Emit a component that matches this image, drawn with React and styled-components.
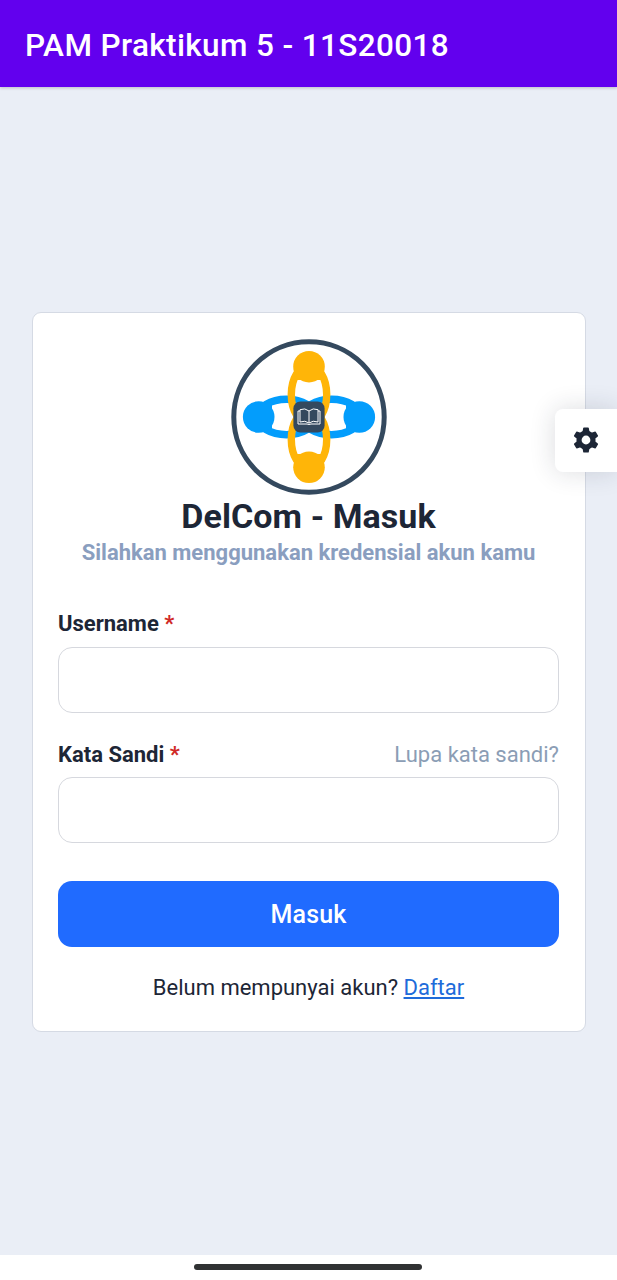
import React from "react";
import styled, { createGlobalStyle } from "styled-components";

const GlobalStyle = createGlobalStyle`
  * { box-sizing: border-box; }
  body { margin: 0; background: #fff; font-family: Roboto, "Liberation Sans", sans-serif; color: #1d2636; }
`;

const Screen = styled.div`
  position: relative;
  display: flex;
  flex-direction: column;
  height: 1280px;
  overflow: hidden;
`;

const AppBar = styled.header`
  display: flex;
  align-items: center;
  flex: none;
  height: 87px;
  padding: 4px 25px 0;
  background: #6200ee;
  box-shadow: 0 1px 3px rgba(0, 0, 0, 0.2);
  z-index: 1;
`;

const AppTitle = styled.h1`
  margin: 0;
  font-size: 31.5px;
  font-weight: 500;
  line-height: 40px;
  letter-spacing: 0.37px;
  white-space: nowrap;
  color: #fff;
`;

const Page = styled.main`
  flex: 1;
  padding: 225px 31px 0 32px;
  background: #eaeef6;
`;

const Card = styled.form`
  display: flex;
  flex-direction: column;
  height: 720px;
  padding: 26px 26px 0 25px;
  border: 1px solid #d5dae4;
  border-radius: 9px;
  background: #fff;
`;

const Brand = styled.div`
  display: flex;
  flex-direction: column;
  align-items: center;
  height: 269px;
`;

const LogoMark = styled.svg`
  flex: none;
  width: 156px;
  height: 156px;
`;

const Title = styled.h2`
  margin: 1px 0 0;
  font-size: 34px;
  font-weight: 700;
  line-height: 40px;
  letter-spacing: 0.07px;
  white-space: nowrap;
`;

const Subtitle = styled.p`
  margin: 3px 0 0;
  font-size: 22px;
  font-weight: 700;
  line-height: 28px;
  white-space: nowrap;
  color: #8a9ebf;
`;

const Field = styled.div`
  display: flex;
  flex-direction: column;
  height: 131px;
`;

const LabelRow = styled.div`
  display: flex;
  justify-content: space-between;
  height: ${({ $compact }) => ($compact ? "38px" : "39px")};
  line-height: 31px;
  font-size: 22px;
  white-space: nowrap;
`;

const Label = styled.label`
  font-weight: 700;
`;

const Required = styled.span`
  color: #d02a27;
`;

const MutedLink = styled.a`
  color: #8b9db5;
`;

const Input = styled.input`
  width: 100%;
  height: 66px;
  padding: 0 18px;
  border: 1px solid #d6d8de;
  border-radius: 14px;
  background: #fff;
  font: inherit;
  font-size: 22px;
  outline: none;
`;

const SubmitButton = styled.button`
  height: 66px;
  margin-top: 11px;
  padding: 2px 0 0;
  border: 0;
  border-radius: 14px;
  background: #206bff;
  color: #fff;
  font: 500 25px/30px Roboto, "Liberation Sans", sans-serif;
  letter-spacing: 0.15px;
`;

const Footer = styled.p`
  margin: 26px 0 0;
  text-align: center;
  font-size: 22px;
  line-height: 30px;
  white-space: nowrap;
`;

const SignUpLink = styled.a`
  color: #206bda;
  text-decoration: underline;
`;

const SettingsTab = styled.button`
  position: absolute;
  top: 409px;
  right: 0;
  display: flex;
  align-items: center;
  justify-content: center;
  width: 62px;
  height: 63px;
  padding: 0 0 2px;
  border: 0;
  border-radius: 8px 0 0 8px;
  background: #fff;
  color: #1d2636;
  box-shadow: 0 0 26px rgba(30, 39, 59, 0.16);
`;

const NavBar = styled.footer`
  display: flex;
  justify-content: center;
  flex: none;
  height: 25px;
  padding: 9px 1px 0 0;
  background: #fff;
`;

const NavHandle = styled.div`
  width: 228px;
  height: 6px;
  border-radius: 3px;
  background: #303233;
`;

function Person({ angle, color }) {
  return (
    <g transform={`rotate(${angle})`}>
      <ellipse cx="0" cy="-22.5" rx="17.7" ry="29" fill="none" stroke={color} strokeWidth="7.4" />
      <circle cx="0" cy="-50.3" r="15.8" fill={color} />
      <path d="M-12-46 V-37 H12 V-46Z" fill={color} />
    </g>
  );
}

function Logo() {
  return (
    <LogoMark viewBox="-78 -78 156 156" aria-hidden="true">
      <circle r="75.2" fill="#fff" stroke="#34495e" strokeWidth="5" />
      <Person angle={-90} color="#039dfc" />
      <Person angle={90} color="#039dfc" />
      <Person angle={0} color="#ffb508" />
      <Person angle={180} color="#ffb508" />
      <rect x="-15.6" y="-15.6" width="31.2" height="31.2" rx="7" fill="#34495e" />
      <g fill="none" stroke="#fff" strokeWidth="1" strokeLinejoin="round">
        <path d="M0-6 Q-4-9.5-9-7.3 V5 Q-4 3 0 6 Q4 3 9 5 V-7.3 Q4-9.5 0-6 V6" />
        <path d="M-9-6 H-11 V7 H-2 Q0 8 2 7 H11 V-6 H9" />
      </g>
    </LogoMark>
  );
}

function GearIcon() {
  return (
    <svg width="26" height="26" viewBox="-13 -13 26 26" aria-hidden="true">
      <g fill="currentColor" stroke="currentColor" strokeWidth="1.4" strokeLinejoin="round">
        {[0, 60, 120, 180, 240, 300].map((angle) => (
          <path key={angle} transform={`rotate(${angle})`} d="M-2.1-11.9 H2.1 L3.2-6 H-3.2Z" />
        ))}
      </g>
      <circle r="7" fill="none" stroke="currentColor" strokeWidth="5.2" />
    </svg>
  );
}

export default function App() {
  return (
    <>
      <GlobalStyle />
      <Screen>
        <AppBar>
          <AppTitle>PAM Praktikum 5 - 11S20018</AppTitle>
        </AppBar>
        <Page>
          <Card>
            <Brand>
              <Logo />
              <Title>DelCom - Masuk</Title>
              <Subtitle>Silahkan menggunakan kredensial akun kamu</Subtitle>
            </Brand>
            <Field>
              <LabelRow>
                <Label htmlFor="username">
                  Username <Required>*</Required>
                </Label>
              </LabelRow>
              <Input id="username" />
            </Field>
            <Field>
              <LabelRow $compact>
                <Label htmlFor="password">
                  Kata Sandi <Required>*</Required>
                </Label>
                <MutedLink>Lupa kata sandi?</MutedLink>
              </LabelRow>
              <Input id="password" type="password" />
            </Field>
            <SubmitButton type="button">Masuk</SubmitButton>
            <Footer>
              Belum mempunyai akun? <SignUpLink>Daftar</SignUpLink>
            </Footer>
          </Card>
        </Page>
        <SettingsTab type="button" aria-label="Settings">
          <GearIcon />
        </SettingsTab>
        <NavBar>
          <NavHandle />
        </NavBar>
      </Screen>
    </>
  );
}
